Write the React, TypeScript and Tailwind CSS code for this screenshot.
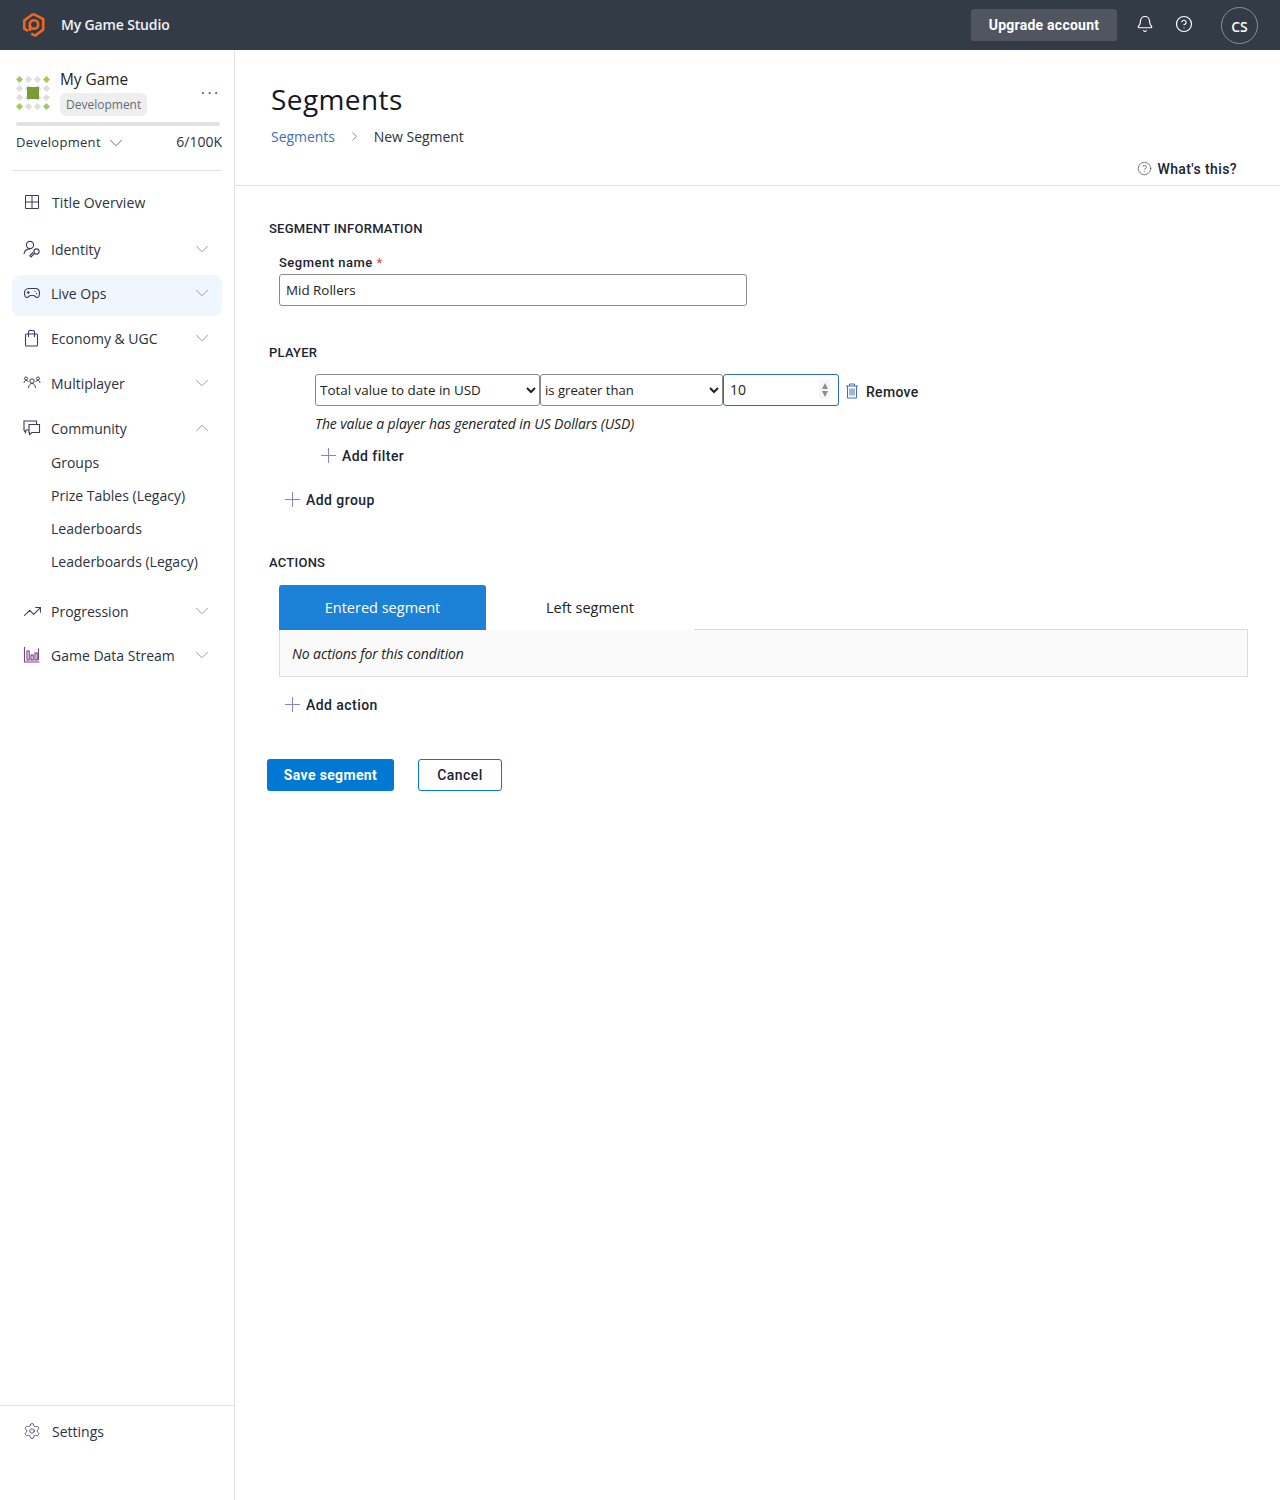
import { Bell, ChevronDown, ChevronRight, ChevronUp, CircleHelp, Settings, TrendingUp } from "lucide-react";
import type { ReactNode } from "react";

const din = "font-['Roboto',sans-serif] font-medium tracking-[0.45px]";

function Logo() {
  return (
    <svg width="24" height="26" viewBox="0 0 26 28" fill="none" stroke="#f26522" strokeWidth="2.8">
      <path d="M12 2 L23 7.5 V19 L14.5 25.5 L10 23.5" />
      <path d="M6.5 20.5 L2.5 18 V9 L12 2" />
      <circle cx="13" cy="13.5" r="4.6" />
      <path d="M8.5 14 V20.5" />
    </svg>
  );
}

function GameIcon() {
  const pos = [0, 1, 2, 3];
  return (
    <svg width="34" height="34" viewBox="0 0 34 34" className="shrink-0">
      {pos.map((r) =>
        pos.map((c) => {
          const corner = (r === 0 || r === 3) && (c === 0 || c === 3);
          const x = 3.5 + c * 9;
          const y = 3.5 + r * 9;
          return (
            <path
              key={`${r}-${c}`}
              d={`M${x} ${y - 3.6} L${x + 3.6} ${y} L${x} ${y + 3.6} L${x - 3.6} ${y} Z`}
              fill={corner ? "#a4c960" : "#dedede"}
            />
          );
        })
      )}
      <rect x="11" y="11" width="12" height="12" fill="#7b9c34" />
    </svg>
  );
}

function NavIcon({ name }: { name: string }) {
  const stroke = "#3d3a5c";
  const common = { width: 18, height: 18, viewBox: "0 0 18 18", fill: "none", stroke, strokeWidth: 1.1 };
  if (name === "overview")
    return (
      <svg width="14" height="14" viewBox="0 0 14 14" fill="none" stroke={stroke} strokeWidth="1">
        <path d="M0.5 0.5 H13.5 V13.5 H0.5 Z M7 0.5 V13.5 M0.5 7 H13.5" />
      </svg>
    );
  if (name === "identity")
    return (
      <svg {...common}>
        <circle cx="7" cy="5" r="3.6" />
        <path d="M1 14 C1.5 10.5 4 9 7 9" />
        <circle cx="13.5" cy="11.5" r="2.6" />
        <path d="M11.5 13.5 L8 17 L6.8 15.8 L10 12.5" />
      </svg>
    );
  if (name === "liveops")
    return (
      <svg {...common}>
        <path d="M5.5 4.5 H12.5 C15 4.5 16.5 6.5 16.5 9 C16.5 11.5 15.5 13.5 14 13.5 C12.5 13.5 12 11.5 10.5 11.5 H7.5 C6 11.5 5.5 13.5 4 13.5 C2.5 13.5 1.5 11.5 1.5 9 C1.5 6.5 3 4.5 5.5 4.5 Z" />
        <path d="M3.8 8.5 H6.8 M5.3 7 V10 M11.5 7.5 H12.5 M13 9.5 H14" />
      </svg>
    );
  if (name === "economy")
    return (
      <svg {...common}>
        <rect x="2.5" y="5" width="12" height="12" rx="1" />
        <path d="M5.5 8 V3 A1.5 1.5 0 0 1 7 1.5 H10 A1.5 1.5 0 0 1 11.5 3 V8" />
      </svg>
    );
  if (name === "multiplayer")
    return (
      <svg {...common} strokeWidth={1}>
        <circle cx="9" cy="7" r="2.2" />
        <path d="M5.5 14 C6 10.5 7.5 9.5 9 9.5 C10.5 9.5 12 10.5 12.5 14" />
        <circle cx="3" cy="4.5" r="1.5" />
        <circle cx="15" cy="4.5" r="1.5" />
        <path d="M1 9 C1 7.5 2 6.5 3 6.5 C4 6.5 5 7 5.5 8 M17 9 C17 7.5 16 6.5 15 6.5 C14 6.5 13 7 12.5 8" />
      </svg>
    );
  if (name === "community")
    return (
      <svg {...common}>
        <path d="M6 11 H3 L2.5 13.5 L1 11 V2 H13.5 V5" />
        <path d="M6 5.5 H16.5 V13.5 H9 L6.5 15.5 V13.5 H6 Z" />
      </svg>
    );
  if (name === "progression") return <TrendingUp size={19} strokeWidth={1.3} color={stroke} />;
  if (name === "data")
    return (
      <svg {...common} stroke="#7a3f86">
        <path d="M1.5 1 V16 H16.5" />
        <rect x="4" y="5" width="2.2" height="9" />
        <rect x="8" y="9" width="2.2" height="5" />
        <rect x="12" y="7" width="2.2" height="7" />
        <path d="M15.5 2.5 V14" />
      </svg>
    );
  return <Settings size={18} strokeWidth={1.1} color={stroke} />;
}

function NavRow({ icon, label, chevron, active, className, labelClass }: { icon: string; label: string; chevron?: "down" | "up"; active?: boolean; className: string; labelClass?: string }) {
  return (
    <div className={`mx-[12px] flex h-[41px] shrink-0 items-center rounded-[8px] pb-[5px] pl-[10px] pr-[9px] ${active ? "bg-[#f0f6fe]" : ""} ${className}`}>
      <span className="flex w-[20px] shrink-0 items-center justify-center">
        <NavIcon name={icon} />
      </span>
      <span className={`ml-[9px] flex-1 text-[14px] text-[#2b3240] ${labelClass ?? ""}`}>{label}</span>
      {chevron === "down" && <ChevronDown size={22} strokeWidth={1} color="#8f949c" />}
      {chevron === "up" && <ChevronUp size={22} strokeWidth={1} color="#8f949c" />}
    </div>
  );
}

function SubRow({ label }: { label: string }) {
  return <div className="flex h-[33px] items-center pl-[51px] text-[14px] text-[#2b3240]">{label}</div>;
}

function Sidebar() {
  return (
    <aside className="flex w-[235px] shrink-0 flex-col border-r border-[#e3e3e3]">
      <div className="px-[16px] pt-[18px]">
        <div className="flex items-start">
          <div className="mt-[8px]">
            <GameIcon />
          </div>
          <div className="ml-[10px] flex-1">
            <div className="h-[22px] text-[15.4px] font-medium leading-[24px] text-[#1f2530]">My Game</div>
            <span className="mt-[3px] inline-flex h-[23px] items-center rounded-[6px] bg-[#eeeeee] px-[6px] text-[12px] text-[#666c75]">Development</span>
          </div>
          <span className="-mr-[3px] mt-[15px] text-[14px] leading-[20px] tracking-[3px] text-[#333]">···</span>
        </div>
        <div className="mt-[6px] h-[4px] w-[204px] rounded-full bg-[#e2e2e2]" />
        <div className="mt-[7px] flex h-[20px] items-center text-[13px] text-[#2b3240]">
          <span className="pb-[1px] font-medium tracking-[0.3px]">Development</span>
          <ChevronDown size={22} strokeWidth={0.9} color="#555" className="ml-[4px]" />
          <span className="-mr-[4px] ml-auto pb-[3px] text-[14px]">6/100K</span>
        </div>
      </div>
      <div className="mx-[12px] mt-[17px] border-t border-[#e3e3e3]" />
      <NavRow icon="overview" label="Title Overview" className="mt-[13px]" labelClass="pl-[1px] tracking-[0.1px]" />
      <NavRow icon="identity" label="Identity" chevron="down" className="mt-[6px]" />
      <NavRow icon="liveops" label="Live Ops" chevron="down" active className="mt-[3px]" />
      <NavRow icon="economy" label="Economy & UGC" chevron="down" className="mt-[4px]" />
      <NavRow icon="multiplayer" label="Multiplayer" chevron="down" className="mt-[4px]" />
      <NavRow icon="community" label="Community" chevron="up" className="mt-[4px]" />
      <div className="-mt-[5px]">
        <SubRow label="Groups" />
        <SubRow label="Prize Tables (Legacy)" />
        <SubRow label="Leaderboards" />
        <SubRow label="Leaderboards (Legacy)" />
      </div>
      <NavRow icon="progression" label="Progression" chevron="down" className="mt-[15px]" />
      <NavRow icon="data" label="Game Data Stream" chevron="down" className="mt-[3px]" />
      <div className="mt-auto h-[95px] border-t border-[#e3e3e3] pt-[15px]">
        <div className="ml-[22px] flex h-[20px] items-center">
          <span className="flex w-[20px] items-center justify-center">
            <NavIcon name="settings" />
          </span>
          <span className="ml-[10px] text-[14px] text-[#2b3240]">Settings</span>
        </div>
      </div>
    </aside>
  );
}

function SectionTitle({ children, className }: { children: ReactNode; className: string }) {
  return <h3 className={`h-[20px] font-['Roboto',sans-serif] text-[13px] font-medium leading-[21px] tracking-[0.25px] text-[#1c2430] ${className}`}>{children}</h3>;
}

function AddLink({ label, className }: { label: string; className: string }) {
  return (
    <div className={`flex h-[20px] items-center ${className}`}>
      <svg width="15" height="15" viewBox="0 0 15 15" fill="none" stroke="#8583c4" strokeWidth="1" className="-mt-[2px] shrink-0">
        <path d="M7.5 0 V15 M0 7.5 H15" />
      </svg>
      <span className={`ml-[6px] text-[14px] text-[#1c2430] ${din}`}>{label}</span>
    </div>
  );
}

function SegmentForm() {
  return (
    <section className="pl-[34px] pr-[32px] pt-[32px]">
      <SectionTitle className="">SEGMENT INFORMATION</SectionTitle>
      <div className="ml-[10px]">
        <label className="mt-[14px] block h-[20px] font-['Roboto',sans-serif] text-[13px] font-medium leading-[21px] tracking-[0.5px] text-[#1c2430]">
          Segment name <span className="text-[#d9534f]">*</span>
        </label>
        <input
          defaultValue="Mid Rollers"
          className="mt-[2px] block h-[32px] w-[468px] rounded-[3px] border border-[#8a8a8a] px-[6px] pb-[1px] text-[13.4px] text-[#222] outline-none"
        />
      </div>

      <SectionTitle className="mt-[36px]">PLAYER</SectionTitle>
      <div className="ml-[46px]">
        <div className="mt-[12px] flex items-center">
          <select className="h-[32px] w-[225px] rounded-[3px] border border-[#8a8a8a] bg-white pb-[1px] text-[13.4px] text-[#222]">
            <option>Total value to date in USD</option>
          </select>
          <select className="h-[32px] w-[183px] rounded-[3px] border border-[#8a8a8a] bg-white pb-[1px] text-[13.1px] text-[#222]">
            <option>is greater than</option>
          </select>
          <div className="relative">
            <input
              type="number"
              defaultValue={10}
              className="block h-[32px] w-[116px] rounded-[3px] border border-[#2b6cb8] px-[6px] pb-[2px] text-[14px] text-[#222] outline-none [appearance:textfield] [&::-webkit-inner-spin-button]:appearance-none"
            />
            {/* spinner arrows */}
            <div className="absolute right-[9px] top-[6px] flex h-[19px] w-[11px] flex-col items-center justify-center gap-[2px] bg-[#f6f6f6]">
              <span className="h-0 w-0 border-x-[3.5px] border-b-[6px] border-x-transparent border-b-[#8d8d8d]" />
              <span className="h-0 w-0 border-x-[3.5px] border-t-[6px] border-x-transparent border-t-[#8d8d8d]" />
            </div>
          </div>
          <svg width="14" height="16" viewBox="0 0 14 16" fill="none" stroke="#3f6fb5" strokeWidth="1" className="ml-[6px] mt-[2px]">
            <path d="M1 3 H13 M4.5 3 V1 H9.5 V3 M2.5 3 V15 H11.5 V3 M5 5.5 V12.5 M7 5.5 V12.5 M9 5.5 V12.5" />
          </svg>
          <span className={`ml-[7px] mt-[4px] text-[14px] text-[#1c2430] ${din} !tracking-[0.3px]`}>Remove</span>
        </div>
        <p className="mt-[8px] h-[20px] text-[14px] italic leading-[20px] tracking-[-0.1px] text-[#222]">The value a player has generated in US Dollars (USD)</p>
        <AddLink label="Add filter" className="ml-[6px] mt-[12px]" />
      </div>
      <AddLink label="Add group" className="ml-[16px] mt-[24px]" />

      <SectionTitle className="mt-[42px]">ACTIONS</SectionTitle>
      <div className="ml-[10px] mt-[13px]">
        <div className="flex h-[45px]">
          <div className="flex w-[207px] items-center justify-center rounded-t-[3px] bg-[#1b82d8] text-[14.5px] text-white">Entered segment</div>
          <div className="flex w-[208px] items-center justify-center text-[14.5px] text-[#222]">Left segment</div>
          <div className="flex-1 border-b border-[#dddddd]" />
        </div>
        <div className="flex h-[47px] items-center border border-t-0 border-[#dddddd] bg-[#fafafa] pl-[12px] text-[14px] italic tracking-[-0.1px] text-[#222]">
          No actions for this condition
        </div>
      </div>
      <AddLink label="Add action" className="ml-[16px] mt-[18px]" />

      <div className="-ml-[2px] mt-[44px] flex">
        <button className={`h-[32px] w-[127px] rounded-[3px] bg-[#0078d4] text-[14px] text-white ${din} !font-bold !tracking-[0.35px]`}>Save segment</button>
        <button className={`ml-[24px] h-[32px] w-[84px] rounded-[3px] border border-[#0078d4] bg-white text-[14px] text-[#1c2430] ${din}`}>Cancel</button>
      </div>
    </section>
  );
}

export default function App() {
  return (
    <div className="flex h-[1500px] flex-col bg-white font-['Open_Sans',sans-serif]">
      <header className="flex h-[50px] shrink-0 items-center bg-[#333b46] pl-[22px] pr-[22px]">
        <Logo />
        <span className="ml-[15px] pb-[1px] text-[14px] font-semibold tracking-[-0.15px] text-[#eef1f5]">My Game Studio</span>
        <button className={`ml-auto h-[32px] w-[146px] rounded-[3px] bg-[#50555f] text-[14px] text-white ${din} !font-bold !tracking-[0.25px]`}>Upgrade account</button>
        <Bell size={18} strokeWidth={1.6} color="#fff" className="-mt-[2px] ml-[19px]" />
        <CircleHelp size={18} strokeWidth={1.6} color="#fff" className="-mt-[2px] ml-[21px]" />
        <div className="ml-[28px] flex h-[37px] w-[37px] items-center justify-center rounded-full border border-[#8b9099] pt-[2px] text-[14px] font-semibold text-white">CS</div>
      </header>
      <div className="flex flex-1">
        <Sidebar />
        <main className="flex-1">
          <div className="border-b border-[#e0e0e0] pb-[6px] pl-[36px] pr-[43px] pt-[29px]">
            <h1 className="h-[40px] text-[28px] leading-[40px] tracking-[0.4px] text-[#14181f]">Segments</h1>
            <div className="mt-[7px] flex h-[20px] items-center text-[14px]">
              <span className="tracking-[-0.05px] text-[#3f6fb5]">Segments</span>
              <ChevronRight size={15} strokeWidth={1} color="#444" className="ml-[12px]" />
              <span className="ml-[12px] tracking-[-0.05px] text-[#2b3240]">New Segment</span>
            </div>
            <div className="mt-[13px] flex h-[20px] items-center justify-end">
              <CircleHelp size={15} strokeWidth={1.1} color="#444" className="-mt-[2px]" />
              <span className={`ml-[5px] text-[14px] text-[#1c2430] ${din} !tracking-[0.4px]`}>What's this?</span>
            </div>
          </div>
          <SegmentForm />
        </main>
      </div>
    </div>
  );
}
